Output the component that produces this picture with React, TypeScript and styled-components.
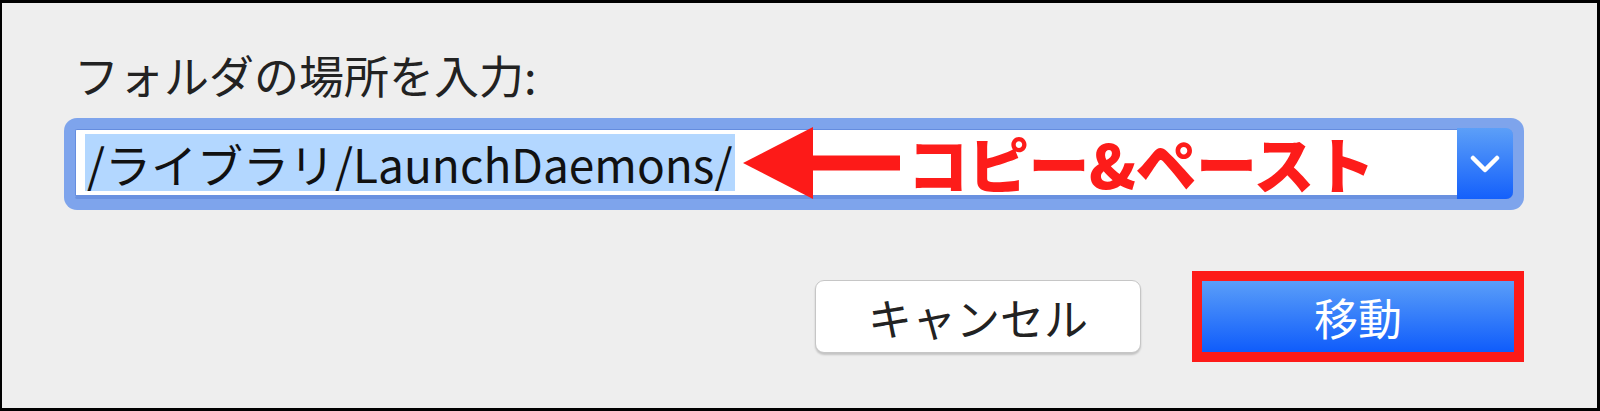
import React from "react";
import styled, { createGlobalStyle } from "styled-components";

const Global = createGlobalStyle`
  html, body { margin: 0; padding: 0; background: #eeeeee; }
  * { box-sizing: border-box; }
`;

const Page = styled.div`
  width: 1600px;
  height: 411px;
  border: 3px solid #000;
  border-left-width: 2px;
  background: #eeeeee;
  padding: 47px 73px 0 62px;
  display: flex;
  flex-direction: column;
  font-family: "Noto Sans CJK JP", "Noto Sans", sans-serif;
`;

const Label = styled.div`
  margin-left: 10px;
  font-size: 45px;
  line-height: 50px;
  color: #222;
  letter-spacing: 0;
`;

const Ring = styled.div`
  margin-top: 18px;
  height: 92px;
  padding: 11px;
  border-radius: 13px;
  background: #7ea4ec;
  display: flex;
`;

const Field = styled.div`
  flex: 1;
  display: flex;
  align-items: stretch;
  background: #fff;
  border: 1px solid #658ddf;
  border-bottom: 4px solid #6a91e0;
  border-radius: 2px 6px 6px 2px;
`;

const TextArea = styled.div`
  flex: 1;
  display: flex;
  align-items: center;
  padding-left: 9px;
`;

const Selection = styled.span`
  display: inline-flex;
  align-items: center;
  height: 57px;
  padding: 0 3px 0 2px;
  background: #b3d7ff;
  color: #111;
  font-size: 46px;
  letter-spacing: 0;
  font-family: "Noto Sans CJK JP", sans-serif;
`;

const Arrow = styled.svg`
  flex: none;
  margin-left: 8px;
`;

const Note = styled.span`
  margin-left: 7px;
  color: #fd1c1a;
  font-size: 61px;
  font-weight: 900;
  letter-spacing: -0.5px;
  line-height: 1;
`;

const DropButton = styled.div`
  flex: none;
  width: 56px;
  margin: -2px -1px -4px 0;
  display: flex;
  align-items: center;
  justify-content: center;
  background: linear-gradient(#5c9ff8, #1460fb);
  border-radius: 0 7px 7px 0;
`;

const ButtonRow = styled.div`
  margin-top: 61px;
  display: flex;
  justify-content: flex-end;
  align-items: center;
  gap: 51px;
`;

const CancelButton = styled.div`
  width: 326px;
  height: 73px;
  display: flex;
  align-items: center;
  justify-content: center;
  background: #fff;
  border: 1px solid #c6c6c6;
  border-radius: 9px;
  box-shadow: 0 2px 2px rgba(0, 0, 0, 0.18);
  font-size: 44px;
  color: #222;
`;

const Highlight = styled.div`
  width: 332px;
  height: 91px;
  border: 10px solid #fd1a18;
  display: flex;
`;

const PrimaryButton = styled.div`
  flex: 1;
  display: flex;
  align-items: center;
  justify-content: center;
  background: linear-gradient(#5a9ef9, #0f5cfb);
  color: #fff;
  font-size: 44px;
`;

export default function App() {
  return (
    <>
      <Global />
      <Page>
        <Label>フォルダの場所を入力:</Label>
        <Ring>
          <Field>
            <TextArea>
              <Selection>/ライブラリ/LaunchDaemons/</Selection>
              <Arrow width="157" height="72" viewBox="0 0 157 72">
                <polygon points="0,36 70,0 70,72" fill="#fd1a18" />
                <rect x="69" y="28.5" width="88" height="15" fill="#fd1a18" />
              </Arrow>
              <Note>コピー&amp;ペースト</Note>
            </TextArea>
            <DropButton>
              <svg width="30" height="18" viewBox="0 0 30 18">
                <polyline
                  points="3,3 15,15 27,3"
                  fill="none"
                  stroke="#fff"
                  strokeWidth="4.5"
                  strokeLinecap="round"
                  strokeLinejoin="round"
                />
              </svg>
            </DropButton>
          </Field>
        </Ring>
        <ButtonRow>
          <CancelButton>キャンセル</CancelButton>
          <Highlight>
            <PrimaryButton>移動</PrimaryButton>
          </Highlight>
        </ButtonRow>
      </Page>
    </>
  );
}
